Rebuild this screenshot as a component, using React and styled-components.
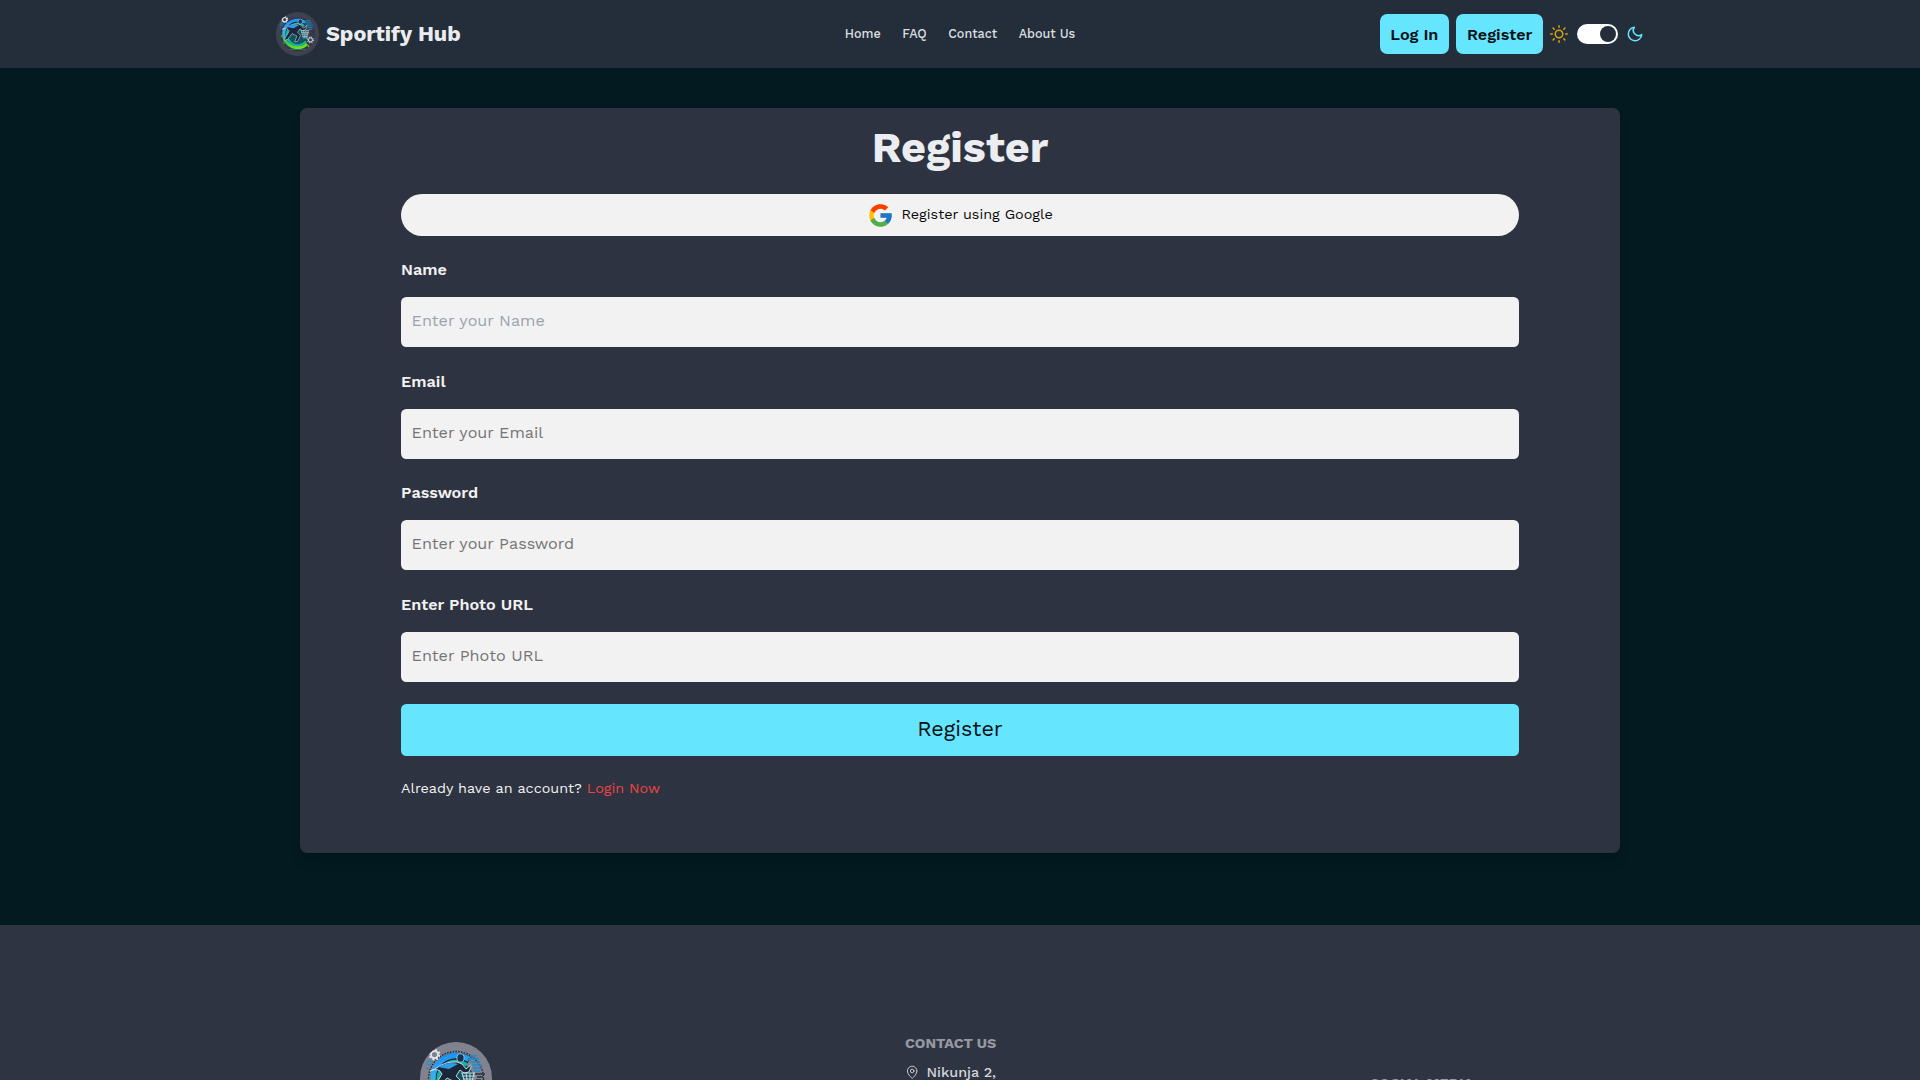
import React from 'react';
import styled, { createGlobalStyle } from 'styled-components';
import { FcGoogle } from 'react-icons/fc';
import { MapPin } from 'lucide-react';

const colors = {
  page: '#021a20',
  header: '#242e3a',
  panel: '#2d3340',
  footer: '#2e3441',
  accent: '#66e5ff',
  field: '#f2f2f2',
};

const GlobalStyle = createGlobalStyle`
  *, *::before, *::after { box-sizing: border-box; }
  body {
    margin: 0;
    overflow: hidden;
    background: ${colors.page};
    font-family: 'Work Sans', 'Open Sans', sans-serif;
    font-size: 14.4px;
    line-height: 21.6px;
    color: #f2f2f2;
  }
  button, input { font-family: inherit; border: 0; margin: 0; }
  a { color: inherit; text-decoration: none; }
`;

const Page = styled.div`
  display: flex;
  flex-direction: column;
  height: 100vh;
  overflow: hidden;
`;

const Header = styled.header`
  flex: none;
  display: grid;
  grid-template-columns: 1fr auto 1fr;
  align-items: center;
  height: 68px;
  padding: 0 276px;
  background: ${colors.header};
`;

const Brand = styled.a`
  display: flex;
  align-items: center;
  gap: 6.8px;
  font-size: 21.6px;
  font-weight: 700;
  color: #ebecee;
`;

const LogoSvg = styled.svg`
  display: block;
  width: ${(p) => p.$size}px;
  height: ${(p) => p.$size}px;
  border-radius: 50%;
  background: ${(p) => p.$backdrop};
`;

const Nav = styled.nav`
  display: flex;
  gap: 21.6px;
  font-size: 12.6px;
  font-weight: 500;
  color: #dcdee0;
`;

const Actions = styled.div`
  display: flex;
  align-items: center;
  justify-content: flex-end;
  gap: 7px;
`;

const NavButton = styled.button`
  height: 40px;
  padding: 1px 10.8px 0;
  border-radius: 7.2px;
  background: ${colors.accent};
  color: #020f12;
  font-size: 16.2px;
  font-weight: 600;
  line-height: 25.2px;
`;

const ThemeSwitch = styled.div`
  display: flex;
  align-items: center;
  gap: 8.4px;
`;

const ThemeIcon = styled.svg`
  display: block;
  width: 18px;
  height: 18px;
  fill: none;
  stroke: ${(p) => p.$tone};
  stroke-width: 2;
  stroke-linecap: round;
  stroke-linejoin: round;
`;

const Track = styled.div`
  display: flex;
  align-items: center;
  justify-content: flex-end;
  width: 41px;
  height: 20px;
  padding: 1.8px 1.2px;
  border-radius: 10px;
  background: #fff;
`;

const Knob = styled.span`
  width: 16.4px;
  height: 16.4px;
  border-radius: 50%;
  background: ${colors.header};
`;

const Card = styled.main`
  flex: none;
  width: 1320px;
  height: 745px;
  margin: 40px auto 72px;
  padding: 18px 101px 54px;
  border-radius: 7.2px;
  background: ${colors.panel};
  box-shadow: 0 9px 13.5px -2.7px rgba(0, 0, 0, 0.1), 0 3.6px 5.4px -3.6px rgba(0, 0, 0, 0.1);
`;

const Title = styled.h1`
  margin: 0 0 24.8px;
  font-size: 43.2px;
  font-weight: 700;
  line-height: 43.2px;
  text-align: center;
  color: #ebedf0;
`;

const GoogleButton = styled.button`
  display: flex;
  align-items: center;
  justify-content: center;
  gap: 7.2px;
  width: 100%;
  height: 42px;
  padding: 1px 0 0;
  border-radius: 21px;
  background: ${colors.field};
  color: #080808;
  font-size: 14.4px;
  line-height: 21.6px;

  svg { font-size: 27px; }
  span { padding-bottom: 1px; }
`;

const Form = styled.form`
  display: flex;
  flex-direction: column;
  gap: 21.6px;
  margin: 21px 0 21.8px;
`;

const Field = styled.label`
  display: flex;
  flex-direction: column;
  gap: 14.8px;
  font-size: 16.2px;
  font-weight: 600;
  line-height: 25.2px;
`;

const Input = styled.input`
  width: 100%;
  height: 50px;
  padding: 0 10.8px 2.6px 10.6px;
  border-radius: 5.4px;
  background: ${colors.field};
  font-size: 16.2px;
  outline: none;

  &::placeholder {
    color: ${(p) => (p.$muted ? '#9ca3af' : '#757575')};
    opacity: 1;
  }
`;

const Submit = styled.button`
  height: 52px;
  margin-top: 0.4px;
  padding: 0;
  border-radius: 5.4px;
  background: ${colors.accent};
  color: #020f12;
  font-size: 21.6px;
  line-height: 28.8px;
`;

const Prompt = styled.p`
  margin: 0;
`;

const LoginLink = styled.a`
  && { color: #ef4444; }
`;

const Footer = styled.footer`
  flex: 1 0 auto;
  display: grid;
  grid-template-columns: 485px 465px 1fr;
  align-items: start;
  padding: 108px 276px 0 420px;
  background: ${colors.footer};
`;

const FooterColumn = styled.section`
  display: flex;
  flex-direction: column;
  gap: 7.2px;
  padding-top: ${(p) => p.$drop || 0}px;
`;

const FooterTitle = styled.h2`
  margin: 0;
  font-size: 14.4px;
  font-weight: 700;
  line-height: 21.6px;
  color: #9699a1;
`;

const Address = styled.div`
  display: flex;
  align-items: center;
  gap: 7px;
  font-weight: 500;
  color: #d3d5d9;
`;

function Gear({ x, y, r, color }) {
  return (
    <g transform={`translate(${x} ${y})`} fill="none" stroke={color}>
      <circle r={r * 0.72} strokeWidth={r * 0.35} />
      <circle r={r} strokeWidth={r * 0.36} strokeDasharray={`${r * 0.393} ${r * 0.393}`} />
    </g>
  );
}

function Logo({ id, size, backdrop }) {
  return (
    <LogoSvg $size={size} $backdrop={backdrop} viewBox="0 0 72 72" aria-label="Sportify Hub logo">
      <defs>
        <linearGradient id={id} x1="0.4" y1="0" x2="0.6" y2="1">
          <stop offset="0" stopColor="#1f93f5" />
          <stop offset="0.4" stopColor="#35b4ee" />
          <stop offset="0.62" stopColor="#25bd7c" />
          <stop offset="1" stopColor="#72dc18" />
        </linearGradient>
      </defs>
      <circle cx="36" cy="37" r="27.5" fill="none" stroke="#242936" strokeWidth="1.5" strokeDasharray="1.5 1.3" />
      <path d="M51 15A26 26 0 1 0 55 55L47 48A16 16 0 1 1 46 24Z" fill="#17202d" />
      <circle cx="36" cy="38" r="18" fill="#12545f" />
      <path d="M49 17.5A23 23 0 1 0 52 53" fill="none" stroke={`url(#${id})`} strokeWidth="5.4" />
      <path d="M47 23A18 18 0 1 0 50 49" fill="none" stroke="#14b3a6" strokeWidth="3.5" />
      <path d="M15 27q10-8 22-7l5 2 4 5 6-5-3 8-5 1-4-3-4 6 5 5-5 10-5 1 4-10-8-4-8 10-6 1 9-15q-3-7-12-3Z" fill="#1b2738" stroke="#d6e5ee" strokeWidth="0.9" />
      <path d="M18 25q11-6 20-3l-9 5Z" fill="#2f9be8" />
      <ellipse cx="40.5" cy="16" rx="3.6" ry="4.2" fill="#17334f" stroke="#9dc9e8" strokeWidth="0.9" />
      <path d="M50 14h7M47 17h12M50 20h10M51 23h11M53 26h8M54 29h6" stroke="#168fd6" strokeWidth="1.4" />
      <path d="M55 32h10M57 35h6M56 38h5" stroke="#26303e" strokeWidth="1.3" />
      <path d="M41 31h14M42 34h13M43 37h11M44 41h9M42 31l4 13M46 31l2 13M50 31v13M54 31l-3 13" fill="none" stroke="#d9e3e8" strokeWidth="0.9" />
      <path d="M10 38v5M8 40h4M13 49v5" stroke="#53bd28" strokeWidth="1.3" />
      <Gear x={14.5} y={12.7} r={4.9} color="#e4e8ec" />
      <Gear x={9.5} y={20.7} r={2.8} color="#238fd5" />
      <Gear x={57.5} y={46.5} r={4.7} color="#cbd5dc" />
      <circle cx="7.3" cy="26.4" r="1" fill="#1686cf" />
      <circle cx="54" cy="57" r="1.6" fill="#54bd29" />
      <path d="M23 62.5h26" stroke="#258c9c" strokeWidth="1.6" strokeDasharray="2 1" />
    </LogoSvg>
  );
}

const links = ['Home', 'FAQ', 'Contact', 'About Us'];

const fields = [
  { label: 'Name', type: 'text', placeholder: 'Enter your Name', muted: true },
  { label: 'Email', type: 'email', placeholder: 'Enter your Email' },
  { label: 'Password', type: 'password', placeholder: 'Enter your Password' },
  { label: 'Enter Photo URL', type: 'text', placeholder: 'Enter Photo URL' },
];

export default function App() {
  return (
    <Page>
      <GlobalStyle />
      <Header>
        <Brand href="#">
          <Logo id="ring-header" size={43.2} backdrop="#3d4150" />
          Sportify Hub
        </Brand>
        <Nav>
          {links.map((link) => (
            <a key={link} href="#">{link}</a>
          ))}
        </Nav>
        <Actions>
          <NavButton>Log In</NavButton>
          <NavButton>Register</NavButton>
          <ThemeSwitch>
            <ThemeIcon viewBox="0 0 24 24" $tone="#d9a50f">
              <circle cx="12" cy="12" r="5" />
              <path d="M12 1v2M12 21v2M4.2 4.2l1.4 1.4M18.4 18.4l1.4 1.4M1 12h2M21 12h2M4.2 19.8l1.4-1.4M18.4 5.6l1.4-1.4" />
            </ThemeIcon>
            <Track>
              <Knob />
            </Track>
            <ThemeIcon viewBox="0 0 24 24" $tone={colors.accent}>
              <path d="M21 12.79A9 9 0 1 1 11.21 3 7 7 0 0 0 21 12.79z" />
            </ThemeIcon>
          </ThemeSwitch>
        </Actions>
      </Header>

      <Card>
        <Title>Register</Title>
        <GoogleButton>
          <FcGoogle />
          <span>Register using Google</span>
        </GoogleButton>
        <Form>
          {fields.map((f) => (
            <Field key={f.label}>
              {f.label}
              <Input type={f.type} placeholder={f.placeholder} $muted={f.muted} />
            </Field>
          ))}
          <Submit type="button">Register</Submit>
        </Form>
        <Prompt>
          Already have an account? <LoginLink href="#">Login Now</LoginLink>
        </Prompt>
      </Card>

      <Footer>
        <FooterColumn $drop={9}>
          <Logo id="ring-footer" size={72} backdrop="#80838e" />
        </FooterColumn>
        <FooterColumn>
          <FooterTitle>CONTACT US</FooterTitle>
          <Address>
            <MapPin size={14.4} strokeWidth={1.5} />
            Nikunja 2,
          </Address>
        </FooterColumn>
        <FooterColumn $drop={39.8}>
          <FooterTitle>SOCIAL MEDIA</FooterTitle>
        </FooterColumn>
      </Footer>
    </Page>
  );
}
